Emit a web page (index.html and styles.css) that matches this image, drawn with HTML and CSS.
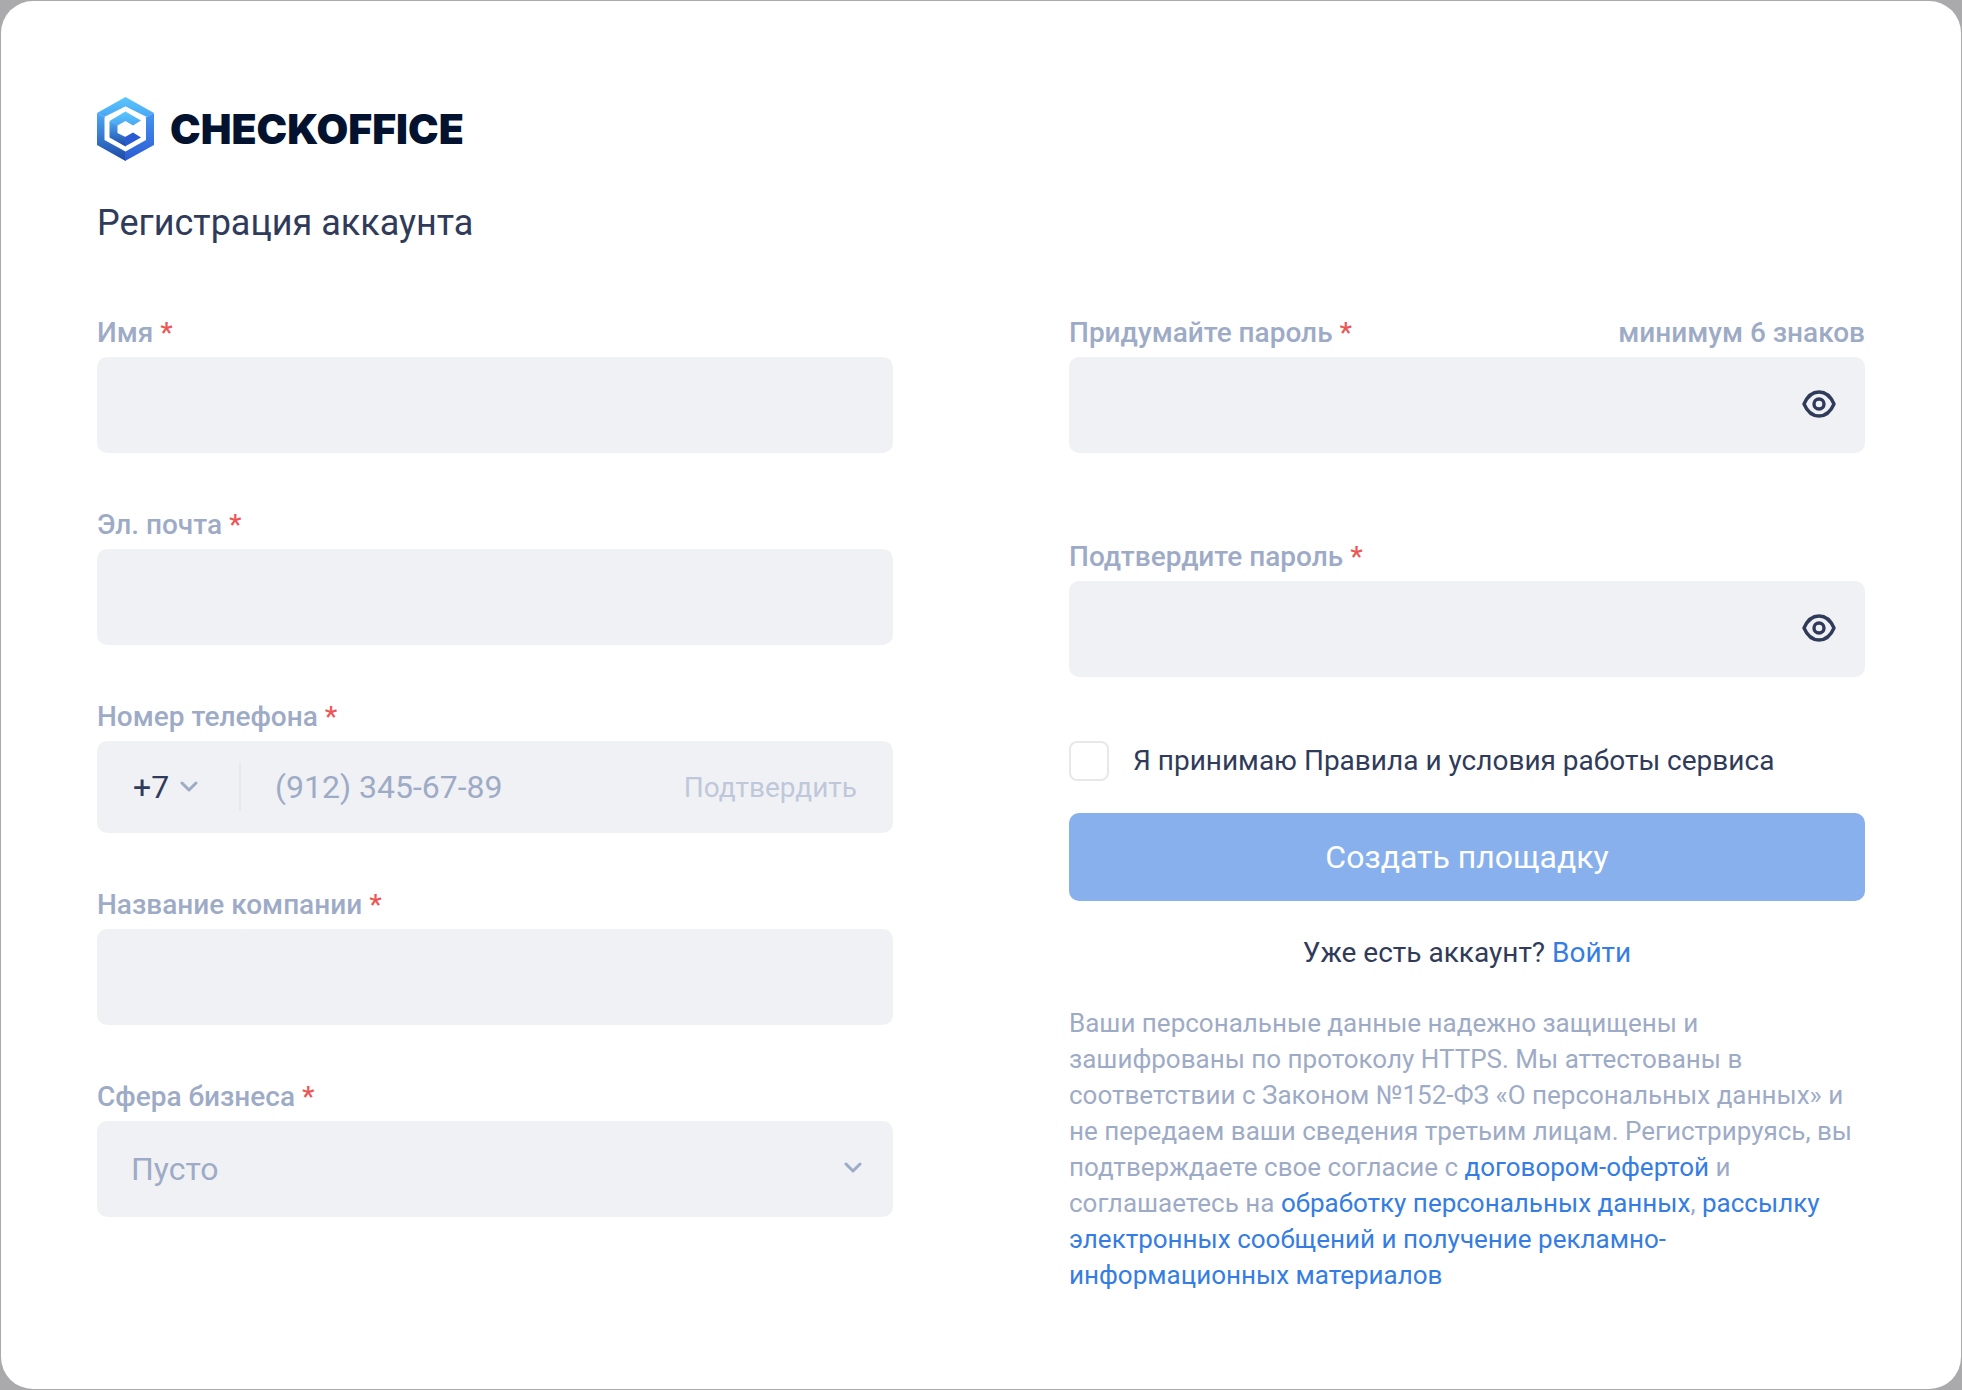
FILE: index.html
```
<!DOCTYPE html>
<html lang="ru">

<head>
    <meta charset="UTF-8">
    <meta name="viewport" content="width=device-width, initial-scale=1.0">
    <title>Регистрация аккаунта</title>
    <link rel="stylesheet" href="styles.css">
</head>

<body>
    <main class="card">
        <div class="logo">
            <svg class="logo-icon" viewBox="0 0 57 64" aria-hidden="true">
                <defs>
                    <linearGradient id="logo-left" x1="0" y1="0" x2="0" y2="1">
                        <stop offset="0" stop-color="#4fa9f5" />
                        <stop offset="1" stop-color="#1d49a6" />
                    </linearGradient>
                    <linearGradient id="logo-right" x1="0" y1="0" x2="0" y2="1">
                        <stop offset="0" stop-color="#4595f0" />
                        <stop offset="1" stop-color="#2b5bd3" />
                    </linearGradient>
                    <linearGradient id="logo-top" x1="0" y1="0" x2="0" y2="1">
                        <stop offset="0" stop-color="#5ac8fc" />
                        <stop offset="1" stop-color="#49a5f4" />
                    </linearGradient>
                </defs>
                <path fill="url(#logo-left)" d="M0 16 28.5 32V64L0 48z" />
                <path fill="url(#logo-right)" d="M57 16 28 32V64L57 48z" />
                <path fill="url(#logo-top)" d="M28.5 0 57 16 50 20 28.5 9.5 7 20 0 16z" />
                <path fill="#fff" d="M28.5 9.5 49 21V43L28.5 54.5 7.5 43V21z" />
                <path fill="url(#logo-left)" d="M12.5 24 20.5 28V36L28.5 40V49.5L12.5 40.5z" />
                <path fill="#2b5bd3" d="M28 40 36 35.5 44 40.5 28 49.5z" />
                <path fill="url(#logo-top)" d="M28.5 14.5 44 23.5 36 28.5 28.5 24 20.5 28.5 12.5 24z" />
            </svg>
            <span class="logo-text">CHECKOFFICE</span>
        </div>

        <h1>Регистрация аккаунта</h1>

        <form class="form">
            <div class="column">
                <div class="field">
                    <label for="name">Имя <span class="required">*</span></label>
                    <input class="input" type="text" id="name">
                </div>

                <div class="field">
                    <label for="email">Эл. почта <span class="required">*</span></label>
                    <input class="input" type="email" id="email">
                </div>

                <div class="field">
                    <label for="phone">Номер телефона <span class="required">*</span></label>
                    <div class="phone">
                        <div class="phone-code">
                            <select aria-label="Код страны">
                                <option>+7</option>
                            </select>
                            <svg class="chevron" viewBox="0 0 18 12" aria-hidden="true">
                                <path d="M2 2 9 9 16 2" />
                            </svg>
                        </div>
                        <input type="tel" id="phone" placeholder="(912) 345-67-89">
                        <button type="button" class="phone-confirm" disabled>Подтвердить</button>
                    </div>
                </div>

                <div class="field">
                    <label for="company">Название компании <span class="required">*</span></label>
                    <input class="input" type="text" id="company">
                </div>

                <div class="field">
                    <label for="business">Сфера бизнеса <span class="required">*</span></label>
                    <div class="control">
                        <select class="input" id="business">
                            <option>Пусто</option>
                        </select>
                        <svg class="chevron control-chevron" viewBox="0 0 18 12" aria-hidden="true">
                            <path d="M2 2 9 9 16 2" />
                        </svg>
                    </div>
                </div>
            </div>

            <div class="column">
                <div class="field field-password">
                    <div class="label-row">
                        <label for="password">Придумайте пароль <span class="required">*</span></label>
                        <span class="hint">минимум 6 знаков</span>
                    </div>
                    <div class="control">
                        <input class="input" type="password" id="password">
                        <button type="button" class="eye" aria-label="Показать пароль">
                            <svg viewBox="0 0 34 28" stroke-width="3.4" aria-hidden="true">
                                <path d="M2 14C5 7 10.5 2 17 2S29 7 32 14C29 21 23.5 26 17 26S5 21 2 14z" />
                                <circle cx="17" cy="14" r="5" />
                            </svg>
                        </button>
                    </div>
                </div>

                <div class="field">
                    <label for="password-repeat">Подтвердите пароль <span class="required">*</span></label>
                    <div class="control">
                        <input class="input" type="password" id="password-repeat">
                        <button type="button" class="eye" aria-label="Показать пароль">
                            <svg viewBox="0 0 34 28" stroke-width="3.4" aria-hidden="true">
                                <path d="M2 14C5 7 10.5 2 17 2S29 7 32 14C29 21 23.5 26 17 26S5 21 2 14z" />
                                <circle cx="17" cy="14" r="5" />
                            </svg>
                        </button>
                    </div>
                </div>

                <div class="agree">
                    <input type="checkbox" id="agree">
                    <label for="agree">Я принимаю Правила и условия работы сервиса</label>
                </div>

                <button type="submit" class="submit" disabled>Создать площадку</button>

                <p class="login">Уже есть аккаунт? <a href="#">Войти</a></p>

                <p class="terms">
                    Ваши персональные данные надежно защищены и зашифрованы по протоколу HTTPS.
                    Мы аттестованы в соответствии с Законом №152-ФЗ «О персональных данных» и не передаем
                    ваши сведения третьим лицам. Регистрируясь, вы подтверждаете свое согласие с
                    <a href="#">договором-офертой</a> и соглашаетесь на
                    <a href="#">обработку персональных данных</a>,
                    <a href="#">рассылку электронных сообщений и получение рекламно-информационных материалов</a>
                </p>
            </div>
        </form>
    </main>
</body>

</html>
```

FILE: styles.css
```
* {
    margin: 0;
    padding: 0;
    box-sizing: border-box;
}

body {
    font-family: Roboto, sans-serif;
    font-size: 28px;
    line-height: 34px;
    color: #303b5a;
    background-color: #aaaaac;
    padding: 1px;
}

input,
select,
button {
    font-family: inherit;
    border: none;
    outline: none;
    background: none;
}

select {
    appearance: none;
    cursor: pointer;
}

a {
    color: #357de2;
    text-decoration: none;
}

.card {
    min-height: calc(100vh - 2px);
    padding: 96px;
    background-color: #fff;
    border-radius: 32px;
}

/* Logo */
.logo {
    display: flex;
    align-items: center;
    gap: 16px;
    height: 64px;
}

.logo-icon {
    width: 57px;
    height: 64px;
}

.logo-text {
    font-family: Inter, sans-serif;
    font-size: 41px;
    font-weight: 900;
    color: #03122f;
}

h1 {
    margin-top: 40px;
    font-size: 36px;
    line-height: 44px;
    font-weight: 400;
}

/* Form */
.form {
    display: grid;
    grid-template-columns: repeat(2, minmax(0, 1fr));
    gap: 176px;
    margin-top: 70px;
}

.field {
    display: flex;
    flex-direction: column;
    gap: 6px;
    margin-bottom: 54px;
}

.field-password {
    margin-bottom: 86px;
}

.field label,
.hint {
    line-height: 36px;
    font-weight: 500;
    color: #9eabc6;
}

.required {
    color: #eb5757;
}

.label-row {
    display: flex;
    justify-content: space-between;
}

.input {
    display: block;
    width: 100%;
    height: 96px;
    padding: 0 34px;
    font-size: 32px;
    color: #303b5a;
    background-color: #f0f1f5;
    border-radius: 10px;
}

select.input {
    color: #9eabc6;
}

.control {
    position: relative;
}

.chevron {
    width: 18px;
    height: 12px;
    fill: none;
    stroke: #9eabc6;
    stroke-width: 3;
    stroke-linecap: round;
    stroke-linejoin: round;
    pointer-events: none;
}

.control-chevron {
    position: absolute;
    top: 41px;
    right: 31px;
}

/* Phone */
.phone {
    display: flex;
    align-items: center;
    height: 92px;
    padding: 0 36px;
    background-color: #f0f1f5;
    border-radius: 10px;
}

.phone-code {
    display: flex;
    align-items: center;
    gap: 10px;
    height: 48px;
    padding-right: 41px;
    border-right: 2px solid #e8e9ec;
}

.phone-code select,
.phone input {
    font-size: 32px;
    color: #303b5a;
}

.phone input {
    flex: 1;
    min-width: 0;
    height: 48px;
    padding: 0 34px;
}

.phone input::placeholder {
    color: #9eabc6;
}

.phone-confirm {
    font-size: 28px;
    color: #bfc8da;
}

/* Show password */
.eye {
    position: absolute;
    top: 33px;
    right: 29px;
    width: 34px;
    height: 28px;
    cursor: pointer;
}

.eye svg {
    display: block;
    fill: none;
    stroke: #303b5a;
    stroke-linejoin: round;
}

.agree {
    display: flex;
    align-items: center;
    gap: 24px;
    margin-top: 64px;
}

.agree input {
    appearance: none;
    width: 40px;
    height: 40px;
    border: 2px solid #e8e8e8;
    border-radius: 8px;
}

.agree input:checked {
    background-color: #357de2;
}

.field:has(+ .agree) {
    margin-bottom: 0;
}

.submit {
    display: block;
    width: 100%;
    height: 88px;
    margin-top: 32px;
    font-size: 32px;
    color: #fff;
    background-color: #88b0ec;
    border-radius: 10px;
}

.login {
    margin-top: 35px;
    text-align: center;
}

.terms {
    margin-top: 35px;
    font-size: 26px;
    line-height: 36px;
    color: #9eabc6;
}

.column .field:last-child {
    margin-bottom: 0;
}

@media (max-width: 1200px) {
    .card {
        padding: 48px;
    }

    .form {
        grid-template-columns: 1fr;
        gap: 54px;
    }
}
```
